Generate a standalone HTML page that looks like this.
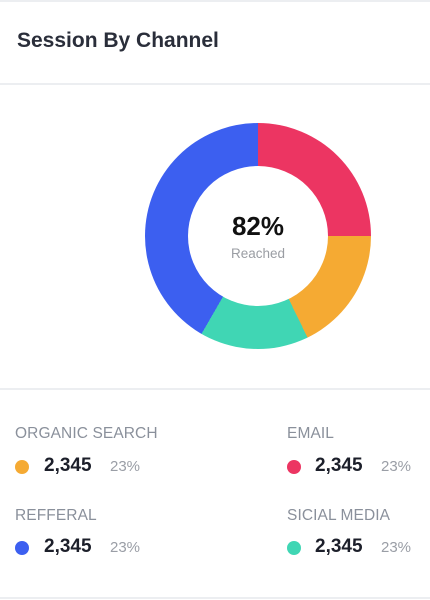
<!DOCTYPE html>
<html><head><style>
*{margin:0;padding:0;box-sizing:border-box}
body{width:430px;height:600px;background:#fff;font-family:"Liberation Sans",Arial,sans-serif;position:relative;overflow:hidden}
.abs{position:absolute;white-space:nowrap}
.line{position:absolute;left:0;width:430px;height:2px;background:#eceef1}
.title{left:17px;top:29px;font-size:21px;font-weight:bold;color:#2a2e3a}
.donut{position:absolute;left:145px;top:123px;width:226px;height:226px;border-radius:50%;
background:conic-gradient(#ec3562 0 90deg,#f5aa33 90deg 154deg,#40d6b4 154deg 210deg,#3c5ff0 210deg 360deg)}
.hole{position:absolute;left:43px;top:43px;width:140px;height:140px;border-radius:50%;background:#fff}
.pct{left:0;width:226px;text-align:center;top:88px;font-size:26px;font-weight:bold;color:#111}
.reach{left:0;width:226px;text-align:center;top:123px;font-size:13.5px;color:#9a9da3}
.lab{font-size:15.5px;color:#8a909b;letter-spacing:0.1px}
.dot{position:absolute;width:14px;height:14px;border-radius:50%}
.num{font-size:19px;font-weight:bold;color:#1c1f2a}
.p{font-size:15px;color:#9a9ea6}
</style></head><body>
<div class="line" style="top:0;height:2px"></div>
<div class="abs title">Session By Channel</div>
<div class="line" style="top:83px"></div>
<div class="donut"><div class="hole"></div>
<div class="abs pct">82%</div><div class="abs reach">Reached</div></div>
<div class="line" style="top:388px"></div>

<div class="abs lab" style="left:15px;top:425px">ORGANIC SEARCH</div>
<div class="dot" style="left:15px;top:460px;background:#f5aa33"></div>
<div class="abs num" style="left:44px;top:455px">2,345</div>
<div class="abs p" style="left:110px;top:458px">23%</div>

<div class="abs lab" style="left:287px;top:425px">EMAIL</div>
<div class="dot" style="left:287px;top:460px;background:#ec3562"></div>
<div class="abs num" style="left:315px;top:455px">2,345</div>
<div class="abs p" style="left:381px;top:458px">23%</div>

<div class="abs lab" style="left:15px;top:507px">REFFERAL</div>
<div class="dot" style="left:15px;top:541px;background:#3c5ff0"></div>
<div class="abs num" style="left:44px;top:536px">2,345</div>
<div class="abs p" style="left:110px;top:539px">23%</div>

<div class="abs lab" style="left:287px;top:507px">SICIAL MEDIA</div>
<div class="dot" style="left:287px;top:541px;background:#40d6b4"></div>
<div class="abs num" style="left:315px;top:536px">2,345</div>
<div class="abs p" style="left:381px;top:539px">23%</div>

<div class="line" style="top:597px"></div>
</body></html>
